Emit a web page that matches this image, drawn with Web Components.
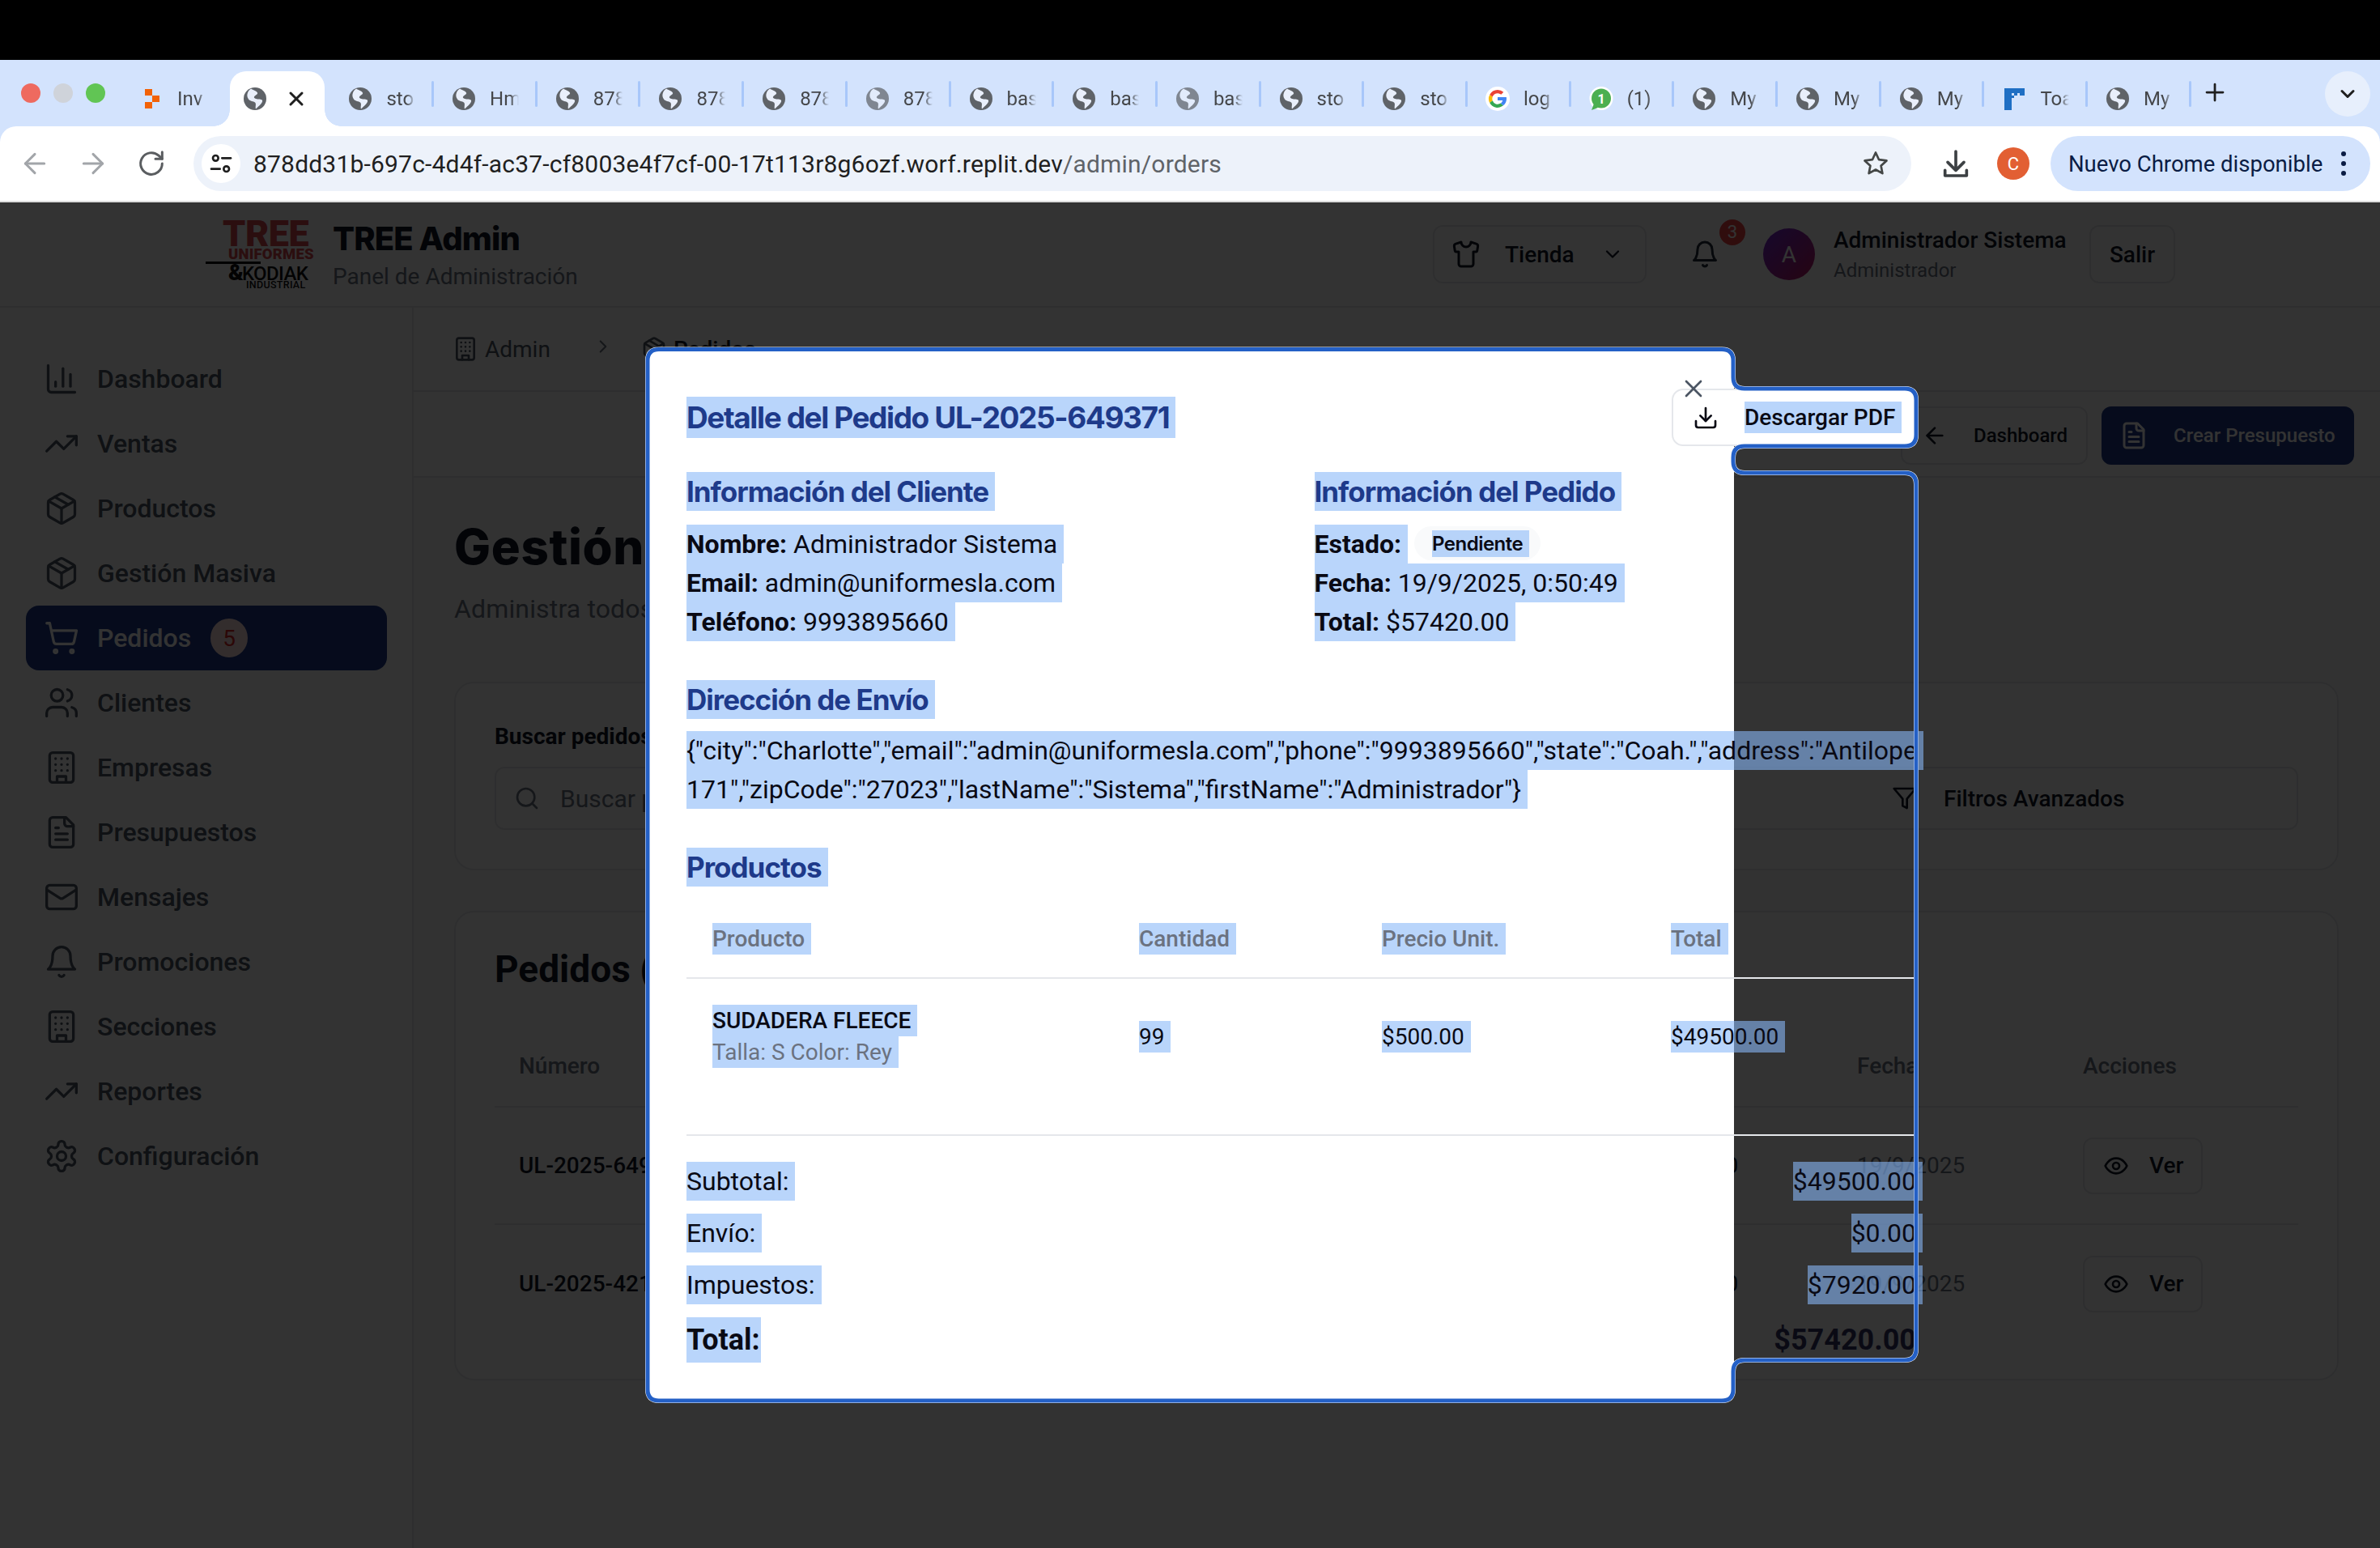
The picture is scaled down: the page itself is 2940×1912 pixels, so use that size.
<!DOCTYPE html>
<html lang="es"><head><meta charset="utf-8"><title>Detalle del Pedido</title>
<style>html,body{margin:0;padding:0;background:#000;overflow:hidden}body{font-family:Roboto,"Liberation Sans",sans-serif}</style>
</head><body>
<browser-window></browser-window>
<script>
const ICONS={
chart:'<path d="M3 3v16a2 2 0 0 0 2 2h16"/><path d="M18 17V9"/><path d="M13 17V5"/><path d="M8 17v-3"/>',
trend:'<polyline points="22 7 13.5 15.5 8.5 10.5 2 17"/><polyline points="16 7 22 7 22 13"/>',
package:'<path d="M11 21.73a2 2 0 0 0 2 0l7-4A2 2 0 0 0 21 16V8a2 2 0 0 0-1-1.73l-7-4a2 2 0 0 0-2 0l-7 4A2 2 0 0 0 3 8v8a2 2 0 0 0 1 1.73z"/><path d="M12 22V12"/><polyline points="3.29 7 12 12 20.71 7"/><path d="m7.5 4.27 9 5.15"/>',
cart:'<circle cx="8" cy="21" r="1"/><circle cx="19" cy="21" r="1"/><path d="M2.05 2.05h2l2.66 12.42a2 2 0 0 0 2 1.58h9.78a2 2 0 0 0 1.95-1.57l1.65-7.43H5.12"/>',
users:'<path d="M16 21v-2a4 4 0 0 0-4-4H6a4 4 0 0 0-4 4v2"/><circle cx="9" cy="7" r="4"/><path d="M22 21v-2a4 4 0 0 0-3-3.87"/><path d="M16 3.13a4 4 0 0 1 0 7.75"/>',
building:'<rect x="4" y="2" width="16" height="20" rx="2"/><path d="M9 22v-4h6v4"/><path d="M8 6h.01M16 6h.01M12 6h.01M12 10h.01M12 14h.01M16 10h.01M16 14h.01M8 10h.01M8 14h.01"/>',
file:'<path d="M15 2H6a2 2 0 0 0-2 2v16a2 2 0 0 0 2 2h12a2 2 0 0 0 2-2V7Z"/><path d="M14 2v4a2 2 0 0 0 2 2h4"/><path d="M10 9H8M16 13H8M16 17H8"/>',
mail:'<rect x="2" y="4" width="20" height="16" rx="2"/><path d="m22 7-8.97 5.7a1.94 1.94 0 0 1-2.06 0L2 7"/>',
bell:'<path d="M6 8a6 6 0 0 1 12 0c0 7 3 9 3 9H3s3-2 3-9"/><path d="M10.3 21a1.94 1.94 0 0 0 3.4 0"/>',
gear:'<path d="M12.22 2h-.44a2 2 0 0 0-2 2v.18a2 2 0 0 1-1 1.73l-.43.25a2 2 0 0 1-2 0l-.15-.08a2 2 0 0 0-2.73.73l-.22.38a2 2 0 0 0 .73 2.73l.15.1a2 2 0 0 1 1 1.72v.51a2 2 0 0 1-1 1.74l-.15.09a2 2 0 0 0-.73 2.73l.22.38a2 2 0 0 0 2.73.73l.15-.08a2 2 0 0 1 2 0l.43.25a2 2 0 0 1 1 1.73V20a2 2 0 0 0 2 2h.44a2 2 0 0 0 2-2v-.18a2 2 0 0 1 1-1.73l.43-.25a2 2 0 0 1 2 0l.15.08a2 2 0 0 0 2.73-.73l.22-.39a2 2 0 0 0-.73-2.73l-.15-.08a2 2 0 0 1-1-1.74v-.5a2 2 0 0 1 1-1.74l.15-.09a2 2 0 0 0 .73-2.73l-.22-.38a2 2 0 0 0-2.73-.73l-.15.08a2 2 0 0 1-2 0l-.43-.25a2 2 0 0 1-1-1.73V4a2 2 0 0 0-2-2z"/><circle cx="12" cy="12" r="3"/>',
shirt:'<path d="M20.38 3.46 16 2a4 4 0 0 1-8 0L3.62 3.46a2 2 0 0 0-1.34 2.23l.58 3.47a1 1 0 0 0 .99.84H6v10c0 1.1.9 2 2 2h8a2 2 0 0 0 2-2V10h2.15a1 1 0 0 0 .99-.84l.58-3.47a2 2 0 0 0-1.34-2.23z"/>',
filter:'<polygon points="22 3 2 3 10 12.46 10 19 14 21 14 12.46 22 3"/>',
search:'<circle cx="11" cy="11" r="8"/><path d="m21 21-4.3-4.3"/>',
eye:'<path d="M2 12s3-7 10-7 10 7 10 7-3 7-10 7-10-7-10-7Z"/><circle cx="12" cy="12" r="3"/>',
download:'<path d="M21 15v4a2 2 0 0 1-2 2H5a2 2 0 0 1-2-2v-4"/><polyline points="7 10 12 15 17 10"/><line x1="12" y1="15" x2="12" y2="3"/>',
x:'<path d="M18 6 6 18"/><path d="m6 6 12 12"/>',
left:'<path d="m12 19-7-7 7-7"/><path d="M19 12H5"/>',
right:'<path d="M5 12h14"/><path d="m12 5 7 7-7 7"/>',
down:'<path d="m6 9 6 6 6-6"/>',
chev:'<path d="m9 18 6-6-6-6"/>',
plus:'<path d="M12 4v16M4 12h16"/>',
reload:'<path d="M20 12a8 8 0 1 1-2.6-5.9L20 8.5"/><path d="M20 3.5v5h-5"/>',
star:'<path d="M12 3l2.7 5.8 6.3.8-4.6 4.3 1.2 6.2L12 17l-5.6 3.1 1.2-6.2L3 9.6l6.3-.8z"/>',
tune:'<circle cx="7" cy="7" r="2.5"/><path d="M13 7h8"/><circle cx="17" cy="17" r="2.5"/><path d="M3 17h8"/>',
dl2:'<path d="M12 3v13"/><path d="m6 11 6 6 6-6"/><path d="M4 17v4h16v-4"/>'
};
function comp(name,css,html,setup){
  class C extends HTMLElement{
    connectedCallback(){
      if(this.shadowRoot)return;
      const r=this.attachShadow({mode:'open'});
      r.innerHTML='<style>'+css+'</style>'+(typeof html==='function'?html(this):html);
      if(setup)setup(this,r);
    }
  }
  customElements.define(name,C);
}
comp('ui-icon',':host{display:inline-flex;flex:none;line-height:0}svg{display:block;fill:none;stroke:currentColor;stroke-linecap:round;stroke-linejoin:round}',
 h=>{const s=h.getAttribute('size')||40,w=h.getAttribute('sw')||2;return `<svg width="${s}" height="${s}" viewBox="0 0 24 24" stroke-width="${w}">${ICONS[h.getAttribute('name')]}</svg>`});
comp('sel-t',':host{display:inline-block;background:rgba(136,184,248,.59);padding-right:8px;white-space:pre;vertical-align:top}','<slot></slot>');

const GLOBE=`<svg width="30" height="30" viewBox="0 0 30 30"><circle cx="15" cy="15" r="14" fill="#5f6368"/><path d="M10 2.5c3 2 6 2 8 5 1 2-3 3-4 5s3 3 5 3 6 0 5 3-6 7-8 9c-1-3 1-6-1-8s-6-1-8-4-2-5-1-8 3-4 4-5z" fill="#e9effb"/></svg>`;
const FAV={
 globe:GLOBE,
 replit:`<svg width="30" height="30" viewBox="0 0 30 30"><path d="M7 3h9v8H7zM16 11h9v8h-9zM7 19h9v8H7z" fill="#f26207"/></svg>`,
 google:`<svg width="34" height="34" viewBox="0 0 30 30"><circle cx="15" cy="15" r="15" fill="#fff"/><path d="M15 4a11 11 0 0 1 7.300 2.800l-3 3A6.700 6.700 0 0 0 8.700 12.700L5.200 10A11 11 0 0 1 15 4z" fill="#ea4335"/><path d="M5.200 10l3.500 2.700a6.700 6.700 0 0 0 0 4.600L5.200 20a11 11 0 0 1 0-10z" fill="#fbbc05"/><path d="M5.200 20l3.500-2.700a6.700 6.700 0 0 0 10 3.300l3.300 2.700A11 11 0 0 1 5.200 20z" fill="#34a853"/><path d="M26 15c0 3.300-1.500 6.400-4 8.300l-3.300-2.700c1.200-.9 2.100-2.100 2.500-3.700H15v-4h10.800c.1.700.2 1.400.2 2.100z" fill="#4285f4"/></svg>`,
 wa:`<svg width="30" height="30" viewBox="0 0 30 30"><circle cx="15" cy="14.500" r="14.500" fill="#fff"/><circle cx="15" cy="14.500" r="12" fill="#4caf50"/><path d="M3 29l3-8 5 5z" fill="#4caf50"/><text x="15" y="20.500" font-size="16" font-family="Roboto" font-weight="700" fill="#fff" text-anchor="middle">1</text></svg>`,
 toast:`<svg width="30" height="30" viewBox="0 0 30 30"><path d="M3 2h25v9H15v3h-3v15H3z" fill="#1f6fc4"/><path d="M12 8h3v3h-3zM19 8h3v3h-3z" fill="#d3e3fd"/></svg>`
};
comp('chrome-tab',`
:host{flex:0 0 127.7px;height:68px;position:relative;display:flex;align-items:center;padding-left:17px;box-sizing:border-box;color:#45474a;font:400 24px Roboto,sans-serif}
.l{margin-left:17px;width:36px;overflow:hidden;white-space:nowrap;-webkit-mask-image:linear-gradient(90deg,#000 70%,transparent);mask-image:linear-gradient(90deg,#000 70%,transparent)}
.f{width:30px;height:30px;flex:none;line-height:0;display:flex;align-items:center;justify-content:center}
:host([faded]) .f{opacity:.72}
:host([sep])::after{content:"";position:absolute;right:5px;top:12px;width:3px;height:32px;background:#a8c7fa;border-radius:2px}
:host([active]){z-index:1;margin-right:3px}
:host([active])::before{content:"";position:absolute;left:1px;right:9px;top:0;bottom:0;background:#fff;border-radius:20px 20px 0 0}
.fl{display:none;position:absolute;bottom:0;width:20px;height:20px}
:host([active]) .fl{display:block}
.fl.a{left:-19px;background:radial-gradient(circle at 0 0,transparent 19.500px,#fff 20px)}
.fl.b{right:-11px;background:radial-gradient(circle at 100% 0,transparent 19.500px,#fff 20px)}
.f,.l,.x{position:relative}
.x{margin-left:22px;color:#1f1f1f;line-height:0}
`,h=>{const a=h.hasAttribute('active');return `<i class="fl a"></i><i class="fl b"></i><span class="f">${FAV[h.getAttribute('icon')||'globe']}</span>`+(a?`<span class="x"><ui-icon name="x" size="28" sw="2.600"></ui-icon></span>`:`<span class="l">${h.getAttribute('label')||''}</span>`)});

comp('chrome-tabs',`
:host{display:flex;height:82px;background:#d3e3fd;box-sizing:border-box;padding-top:14px;position:relative}
.lights{display:flex;gap:16px;width:155px;box-sizing:border-box;padding:15px 0 0 26px;height:54px}
.lights i{width:24px;height:24px;border-radius:50%}
.plus{flex:none;margin-left:4px;width:40px;height:68px;display:flex;align-items:center;justify-content:center;color:#1f1f1f;margin-top:-8px}
.more{margin-left:auto;margin-right:12px;width:56px;height:56px;border-radius:50%;background:#e7effc;display:flex;align-items:center;justify-content:center;color:#1f1f1f}
`,`<div class="lights"><i style="background:#ee6a5f"></i><i style="background:#cfd3da"></i><i style="background:#61c554"></i></div>
<chrome-tab icon="replit" label="Inv"></chrome-tab>
<chrome-tab active></chrome-tab>
<chrome-tab label="sto" sep></chrome-tab><chrome-tab label="Hm" sep></chrome-tab>
<chrome-tab label="878" sep></chrome-tab><chrome-tab label="878" sep></chrome-tab><chrome-tab label="878" sep></chrome-tab><chrome-tab label="878" faded sep></chrome-tab>
<chrome-tab label="bas" sep></chrome-tab><chrome-tab label="bas" sep></chrome-tab><chrome-tab label="bas" faded sep></chrome-tab>
<chrome-tab label="sto" sep></chrome-tab><chrome-tab label="sto" sep></chrome-tab>
<chrome-tab icon="google" label="log" sep></chrome-tab><chrome-tab icon="wa" label="(1)" sep></chrome-tab>
<chrome-tab label="My" sep></chrome-tab><chrome-tab label="My" sep></chrome-tab><chrome-tab label="My" sep></chrome-tab>
<chrome-tab icon="toast" label="Toa" sep></chrome-tab><chrome-tab label="My" sep></chrome-tab>
<div class="plus"><ui-icon name="plus" size="30" sw="2.200"></ui-icon></div>
<div class="more"><ui-icon name="down" size="28" sw="2.600"></ui-icon></div>`);

comp('chrome-toolbar',`
:host{display:flex;align-items:center;height:92px;background:#fff;border-radius:20px 20px 0 0;box-sizing:border-box;padding-left:23px;font-family:Roboto,sans-serif}
.nav{display:flex;gap:32px;margin-right:32px}
.g{color:#a2a5a9}.d{color:#5a5d60}
.omni{width:2122px;height:68px;border-radius:34px;background:#edf2fa;display:flex;align-items:center;padding:0 26px 0 10px;box-sizing:border-box;flex:none}
.chip{width:48px;height:48px;border-radius:50%;background:#fff;display:flex;align-items:center;justify-content:center;color:#1f1f1f;margin-right:16px;flex:none}
.url{flex:1;font-size:30px;color:#1f1f1f;white-space:nowrap;letter-spacing:.19px}
.url span{color:#5f6368}
.st{color:#444746}
.dl{margin-left:35px;color:#3c4043}
.c{margin-left:31px;width:40px;height:40px;border-radius:50%;background:#e25f33;color:#fff;font-size:22px;display:flex;align-items:center;justify-content:center}
.pill{margin-left:26px;width:395px;height:68px;border-radius:34px;background:#d3e3fd;color:#0a1c44;display:flex;align-items:center;padding-left:22px;box-sizing:border-box;font-size:27.500px;white-space:nowrap}
.dots{margin-left:23px;display:flex;flex-direction:column;gap:6px}
.dots i{width:6px;height:6px;border-radius:50%;background:#0a1c44}
`,`<div class="nav"><ui-icon class="g" name="left" size="40" sw="1.800"></ui-icon><ui-icon class="g" name="right" size="40" sw="1.800"></ui-icon><ui-icon class="d" name="reload" size="40" sw="1.800"></ui-icon></div>
<div class="omni"><div class="chip"><ui-icon name="tune" size="32"></ui-icon></div><div class="url">878dd31b-697c-4d4f-ac37-cf8003e4f7cf-00-17t113r8g6ozf.worf.replit.dev<span>/admin/orders</span></div><ui-icon class="st" name="star" size="36" sw="1.800"></ui-icon></div>
<ui-icon class="dl" name="dl2" size="40" sw="2.200"></ui-icon><div class="c">C</div>
<div class="pill">Nuevo Chrome disponible<div class="dots"><i></i><i></i><i></i></div></div>`);

comp('tree-logo',`
:host{display:flex;flex-direction:column;width:133px;height:84px;color:#111;font-family:Roboto,sans-serif;font-weight:800;box-sizing:border-box;line-height:1;flex:none;overflow:visible}
div{white-space:nowrap}
.t{color:#d8484a;font-size:45px;height:32px;line-height:32px;margin:1px 0 0 21px;letter-spacing:-.5px;font-weight:900}
.u{color:#d8484a;font-size:18.500px;height:14px;line-height:14px;margin:2px 0 0 28px;letter-spacing:.2px;font-weight:900}
.r{height:3px;width:68px;background:#0a0a0a;margin-top:2px}
.k{font-size:24px;height:19px;line-height:19px;margin:1px 0 0 28px;font-weight:500;letter-spacing:-.6px}
.k b{font-weight:900;font-size:28px;letter-spacing:-2px}
.i{font-size:12.500px;height:9px;line-height:9px;margin:1px 0 0 50px;font-weight:500;letter-spacing:.3px}
`,`<div class="t">TREE</div><div class="u">UNIFORMES</div><div class="r"></div><div class="k"><b>&amp;</b>KODIAK</div><div class="i">INDUSTRIAL</div>`);

comp('ui-btn',`
:host{display:inline-flex;align-items:center;box-sizing:border-box;height:72px;border:2px solid #e5e7eb;border-radius:12px;background:#fff;font:500 28px Roboto,sans-serif;color:#111827;white-space:nowrap;flex:none}
:host([primary]){background:#1e3a8a;border-color:#1e3a8a;color:#fff}
`,'<slot></slot>');

comp('admin-header',`
:host{display:flex;align-items:center;height:130px;box-sizing:border-box;border-bottom:2px solid #e5e7eb;background:#fff;padding:0 253px 0 254px;font-family:Roboto,sans-serif}
.brand{margin-left:24px;display:flex;flex-direction:column;padding-top:4px}
.h{font:800 40px/48px Inter,sans-serif;color:#111827;letter-spacing:-.9px}
.s{font-size:28px;line-height:40px;color:#6b7280;margin-top:3px}
.sp{flex:1}
.tienda{width:264px;padding-left:21px;gap:30px}
.bell{margin-left:54px;width:40px;position:relative;color:#1f2937;line-height:0}
.badge{position:absolute;left:36px;top:-25px;width:32px;height:32px;border-radius:50%;background:#ef4444;color:#fff;display:flex;align-items:center;justify-content:center;font-size:22px;line-height:1}
.av{margin-left:50px;width:64px;height:64px;border-radius:50%;background:linear-gradient(135deg,#6d28d9,#be185d);color:#fff;display:flex;align-items:center;justify-content:center;font-size:28px;flex:none}
.who{margin-left:23px;width:316px;display:flex;flex-direction:column;padding-top:2px}
.n{font-size:28px;line-height:38px;font-weight:500;color:#111827;white-space:nowrap}
.r{font-size:24px;line-height:36px;color:#6b7280}
.salir{width:106px;justify-content:center}
.chev{margin-left:3px}
`,`<tree-logo></tree-logo><div class="brand"><div class="h">TREE Admin</div><div class="s">Panel de Administración</div></div><div class="sp"></div>
<ui-btn class="tienda"><ui-icon name="shirt" size="36"></ui-icon><span>Tienda</span><ui-icon class="chev" name="down" size="28"></ui-icon></ui-btn>
<div class="bell"><ui-icon name="bell" size="36"></ui-icon><div class="badge">3</div></div>
<div class="av">A</div><div class="who"><div class="n">Administrador Sistema</div><div class="r">Administrador</div></div>
<ui-btn class="salir">Salir</ui-btn>`);

comp('nav-item',`
:host{display:flex;align-items:center;height:80px;border-radius:16px;padding-left:22px;gap:22px;font:500 32px Roboto,sans-serif;color:#4b5563;box-sizing:border-box}
:host([active]){background:#1e3a8a;color:#fff}
.b{margin-left:2px;width:46px;height:48px;border-radius:50%;background:#fee2e2;color:#dc2626;display:flex;align-items:center;justify-content:center;font-size:28px;font-weight:400}
`,h=>`<ui-icon name="${h.getAttribute('icon')}" size="44" sw="1.800"></ui-icon><span><slot></slot></span>`+(h.getAttribute('badge')?`<span class="b">${h.getAttribute('badge')}</span>`:''));

comp('admin-sidebar',`:host{display:flex;flex-direction:column;width:511px;flex:none;box-sizing:border-box;padding:48px 31px 0 32px;border-right:2px solid #e5e7eb;background:#fff}`,
`<nav-item icon="chart">Dashboard</nav-item><nav-item icon="trend">Ventas</nav-item><nav-item icon="package">Productos</nav-item><nav-item icon="package">Gestión Masiva</nav-item><nav-item icon="cart" active badge="5">Pedidos</nav-item><nav-item icon="users">Clientes</nav-item><nav-item icon="building">Empresas</nav-item><nav-item icon="file">Presupuestos</nav-item><nav-item icon="mail">Mensajes</nav-item><nav-item icon="bell">Promociones</nav-item><nav-item icon="building">Secciones</nav-item><nav-item icon="trend">Reportes</nav-item><nav-item icon="gear">Configuración</nav-item>`);

comp('ui-card',`:host{display:block;background:#fff;border:2px solid #e5e7eb;border-radius:24px;box-sizing:border-box;padding:0 48px}`,'<slot></slot>');

comp('admin-main',`
:host{display:flex;flex-direction:column;flex:1;min-width:0;background:#f9fafb;font-family:Roboto,sans-serif;color:#111827}
.crumb{height:104px;box-sizing:border-box;border-bottom:2px solid #e5e7eb;background:#fff;display:flex;align-items:center;padding-left:48px;font-size:28px;color:#4b5563}
.crumb span{margin-left:8px}
.crumb .c{margin:0 34px 0 52px;color:#6b7280}
.crumb .p{color:#111827;font-weight:500}
.bar{height:106px;box-sizing:border-box;border-bottom:2px solid #e5e7eb;background:#fff;display:flex;justify-content:flex-end;align-items:center;padding:4px 32px 0 0;gap:17px}
.back{width:231px;padding-left:24px;gap:32px;font-size:24px}
.crear{width:312px;padding-left:20px;gap:31px;font-size:24px}
.wrap{padding:0 51px 0 50px}
h1{margin:0;font:800 60px/80px Inter,sans-serif;padding-top:45px;color:#111827;letter-spacing:.6px;white-space:nowrap}
.sub{font-size:32px;line-height:48px;color:#6b7280;margin-top:13px;white-space:nowrap;letter-spacing:.15px}
.search{margin-top:66px;height:233px}
.lab{font-size:28px;font-weight:700;padding-top:46px;line-height:40px;white-space:nowrap}
.row{display:flex;justify-content:space-between;margin-top:17px}
.inp{width:1100px;height:78px;border:2px solid #e5e7eb;border-radius:12px;box-sizing:border-box;display:flex;align-items:center;padding-left:22px;gap:25px;color:#6b7280;font-size:30px;background:#fff}
.fil{width:1200px;height:78px;justify-content:flex-start;padding-left:696px;gap:32px;box-sizing:border-box}
.orders{margin-top:50px;height:580px}
h2{margin:0;font:700 46px/64px Roboto,sans-serif;padding-top:38px;white-space:nowrap}
.g{display:grid;grid-template-columns:1373px 280px 279px 1fr;padding-left:30px;align-items:center;box-sizing:border-box}
.th{height:139px;padding-top:38px;border-bottom:2px solid #e5e7eb;color:#6b7280;font-weight:500;font-size:28px}
.tr{height:145px;border-bottom:2px solid #e5e7eb;font-size:28px}
.tr:last-child{border-bottom:0}
.num{font-weight:500}.date{color:#6b7280}
.ver{width:148px;height:70px;padding-left:23px;gap:25px}
`,`<div class="crumb"><ui-icon name="building" size="32"></ui-icon><span>Admin</span><span class="c"><ui-icon name="chev" size="26"></ui-icon></span><ui-icon name="package" size="32"></ui-icon><span class="p">Pedidos</span></div>
<div class="bar"><ui-btn class="back"><ui-icon name="left" size="32"></ui-icon>Dashboard</ui-btn><ui-btn primary class="crear"><ui-icon name="file" size="36"></ui-icon>Crear Presupuesto</ui-btn></div>
<div class="wrap"><h1>Gestión de Pedidos</h1><div class="sub">Administra todos los pedidos</div>
<ui-card class="search"><div class="lab">Buscar pedidos</div><div class="row"><div class="inp"><ui-icon name="search" size="32"></ui-icon><span>Buscar pedidos...</span></div><ui-btn class="fil"><ui-icon name="filter" size="32"></ui-icon>Filtros Avanzados</ui-btn></div></ui-card>
<ui-card class="orders"><h2>Pedidos (2)</h2>
<div class="g th"><div>Número</div><div>Total</div><div>Fecha</div><div>Acciones</div></div>
<div class="g tr"><div class="num">UL-2025-649371</div><div>$57420.00</div><div class="date">19/9/2025</div><ui-btn class="ver"><ui-icon name="eye" size="32"></ui-icon>Ver</ui-btn></div>
<div class="g tr"><div class="num">UL-2025-421573</div><div>$57420.00</div><div class="date">19/9/2025</div><ui-btn class="ver"><ui-icon name="eye" size="32"></ui-icon>Ver</ui-btn></div>
</ui-card></div>`);

comp('order-dialog',`
:host{position:absolute;left:800px;top:181px;width:1342px;height:1299px;background:#fff;border-radius:14px;box-sizing:border-box;padding:49px 0 0 48px;font:400 32px/48px Roboto,sans-serif;color:#0a0a14}
.in{width:1519px}
.hd{display:flex;justify-content:space-between;align-items:center;height:71px;margin-bottom:32px}
h2{margin:0;font:700 37px/51px Inter,sans-serif;color:#1e3a8a;letter-spacing:-1.4px}
h3{margin:0;font:700 35px/48px Inter,sans-serif;color:#1e3a8a;letter-spacing:-1px}
.pdf{width:302px;height:71px;border:2px solid #e5e7eb;border-radius:14px;background:#fff;box-sizing:border-box;display:flex;align-items:center;padding-left:24px;gap:32px;font:500 28px/39px Roboto,sans-serif;color:#0a0a14;flex:none}
.two{display:grid;grid-template-columns:1fr 1fr;column-gap:32px}
.lines{margin-top:17px;display:flex;flex-direction:column}
b{font-weight:700}
.pill{display:inline-flex;align-items:center;height:42px;border-radius:21px;background:#f9fafb;padding:0 14px 0 22px;margin-left:8px;font:600 24px/33px Inter,sans-serif;vertical-align:top;margin-top:2px;letter-spacing:-.5px}
.sec{margin-top:48px}
.addr{margin-top:15px;display:flex;flex-direction:column}
.t{font-size:28px;line-height:39px}
.tg{display:grid;grid-template-columns:527px 300px 357px 1fr;padding-left:32px}
.th{padding:45px 0 28px 32px;border-bottom:2px solid #e5e7eb;color:#6b7280;font-weight:500}
.td{padding-top:32px;height:144px;box-sizing:border-box;align-items:start}
.td .m{padding-top:20px}
.nm{font-weight:500;color:#0a0a14}.var{color:#6b7280}
.nmw{display:flex;flex-direction:column;align-items:flex-start}
.sum{margin-top:48px;border-top:2px solid #e5e7eb;padding-top:32px;display:flex;flex-direction:column;gap:16px}
.sr{display:flex;justify-content:space-between;margin-right:-8px}
.tot{font-size:36px;line-height:56px;font-weight:700}
.tot sel-t{padding-right:1px}
.tot .v{padding-right:8px}
.close{position:absolute;right:32px;top:31px;color:#4b5563;z-index:2;line-height:0}
`,`<div class="close"><ui-icon name="x" size="36" sw="1.800"></ui-icon></div>
<div class="in">
<div class="hd"><h2><sel-t>Detalle del Pedido UL-2025-649371</sel-t></h2><div class="pdf"><ui-icon name="download" size="32"></ui-icon><sel-t>Descargar PDF</sel-t></div></div>
<div class="two"><div><h3><sel-t>Información del Cliente</sel-t></h3><div class="lines"><div><sel-t><b>Nombre:</b> Administrador Sistema</sel-t></div><div><sel-t><b>Email:</b> admin@uniformesla.com</sel-t></div><div><sel-t><b>Teléfono:</b> 9993895660</sel-t></div></div></div>
<div><h3><sel-t>Información del Pedido</sel-t></h3><div class="lines"><div><sel-t><b>Estado:</b></sel-t><span class="pill"><sel-t>Pendiente</sel-t></span></div><div><sel-t><b>Fecha:</b> 19/9/2025, 0:50:49</sel-t></div><div><sel-t><b>Total:</b> $57420.00</sel-t></div></div></div></div>
<div class="sec"><h3><sel-t>Dirección de Envío</sel-t></h3><div class="addr"><div><sel-t>{"city":"Charlotte","email":"admin@uniformesla.com","phone":"9993895660","state":"Coah.","address":"Antilope</sel-t></div><div><sel-t>171","zipCode":"27023","lastName":"Sistema","firstName":"Administrador"}</sel-t></div></div></div>
<div class="sec"><h3><sel-t>Productos</sel-t></h3>
<div class="t tg th"><div><sel-t>Producto</sel-t></div><div><sel-t>Cantidad</sel-t></div><div><sel-t>Precio Unit.</sel-t></div><div><sel-t>Total</sel-t></div></div>
<div class="t tg td"><div class="nmw"><sel-t class="nm">SUDADERA FLEECE</sel-t><sel-t class="var">Talla: S Color: Rey</sel-t></div><div class="m"><sel-t>99</sel-t></div><div class="m"><sel-t>$500.00</sel-t></div><div class="m"><sel-t>$49500.00</sel-t></div></div>
</div>
<div class="sum"><div class="sr"><sel-t>Subtotal:</sel-t><sel-t>$49500.00</sel-t></div><div class="sr"><sel-t>Envío:</sel-t><sel-t>$0.00</sel-t></div><div class="sr"><sel-t>Impuestos:</sel-t><sel-t>$7920.00</sel-t></div><div class="sr tot"><sel-t>Total:</sel-t><span class="v">$57420.00</span></div></div>
</div>`);

const RING="M814 431.500H2127Q2141 431.500 2141 445.500V466Q2141 480 2155 480H2353Q2367 480 2367 494V537Q2367 551 2353 551H2155Q2141 551 2141 565V570Q2141 584 2155 584H2353Q2367 584 2367 598V1666Q2367 1680 2353 1680H2155Q2141 1680 2141 1694V1716Q2141 1730 2127 1730H814Q800 1730 800 1716V445.500Q800 431.500 814 431.500Z";
comp('admin-app',`
:host{display:block;position:relative;flex:1;min-height:0;overflow:hidden;background:#fff}
.body{display:flex;height:calc(100% - 130px)}
.ov{position:absolute;inset:0;background:rgba(0,0,0,.8)}
svg{position:absolute;left:0;top:0;pointer-events:none}
`,`<admin-header></admin-header><div class="body"><admin-sidebar></admin-sidebar><admin-main></admin-main></div><div class="ov"></div><order-dialog></order-dialog>
<svg width="2940" height="1662" viewBox="0 250 2940 1662" fill="none"><path d="${RING}" stroke="#fff" stroke-width="6"/><path d="${RING}" stroke="#2460c6" stroke-width="5"/></svg>`);

comp('browser-window',`
:host{display:flex;flex-direction:column;width:2940px;height:1912px;background:#000;overflow:hidden}
.top{height:74px;background:#000;flex:none}
.sep{height:2px;background:#dcdcdc;flex:none}
.tb{background:#d3e3fd;flex:none}
`,`<div class="top"></div><chrome-tabs></chrome-tabs><div class="tb"><chrome-toolbar></chrome-toolbar></div><div class="sep"></div><admin-app></admin-app>`);
</script>
</body></html>
